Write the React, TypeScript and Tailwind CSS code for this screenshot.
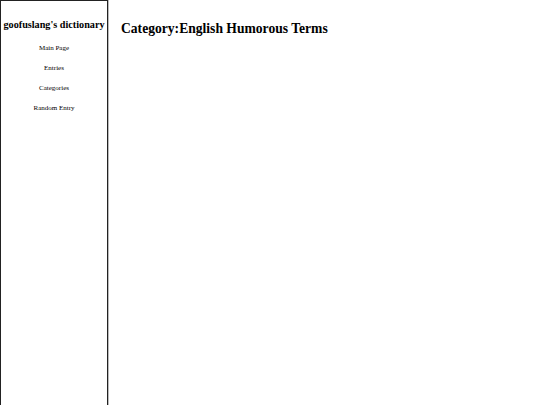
export default function App() {
  const links = ["Main Page", "Entries", "Categories", "Random Entry"];
  return (
    <div className="flex h-[405px] w-[540px] bg-white font-['Liberation_Serif',serif] text-black">
      <div className="flex h-full w-[108px] shrink-0 flex-col items-center border-l border-t border-r border-[#222] shadow-[1px_0_0_#bbb]">
        <div className="mt-[17px] whitespace-nowrap text-[10.2px] font-bold leading-[14px]">goofuslang's dictionary</div>
        <div className="mt-[11px] flex flex-col items-center gap-[10px] text-[7px] leading-[10px]">
          {links.map((l) => (
            <div key={l}>{l}</div>
          ))}
        </div>
      </div>
      <div className="flex-1 pl-[13px] pt-[20px]">
        <h1 className="text-[13.6px] font-bold leading-[18px]">Category:English Humorous Terms</h1>
      </div>
    </div>
  );
}
